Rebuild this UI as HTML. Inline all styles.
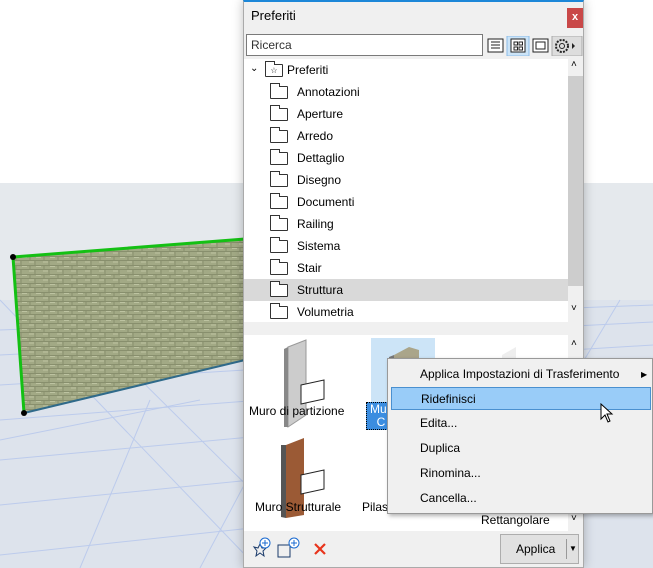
<!DOCTYPE html>
<html><head><style>
*{margin:0;padding:0;box-sizing:border-box}
body{width:653px;height:568px;overflow:hidden;position:relative;background:#fff;font-family:"Segoe UI","Liberation Sans",sans-serif;font-size:12px;color:#000}
.abs{position:absolute}
.row{position:absolute;left:0;height:22px;line-height:22px;width:324px}
.fold{position:absolute;width:18px;height:13px;border:1px solid #333;background:#fff;border-radius:1px}
.fold:before{content:"";position:absolute;left:-1px;top:-4px;width:8px;height:3px;border:1px solid #333;border-bottom:none;background:#fff}
.mi{position:absolute;left:3px;width:260px;height:23px;line-height:23px;padding-left:29px;font-size:12px}
</style></head><body>
<svg class="abs" style="left:0;top:0" width="653" height="568">
<defs><pattern id="st" width="14" height="9" patternUnits="userSpaceOnUse"><rect width="14" height="9" fill="#a2a985"/><path d="M0 8.5H14M7 0V4.5M0 4.5H14M2 4.5V9" stroke="#7d8462" stroke-width="1" opacity=".7"/><path d="M1 1H6M8 5.5H13" stroke="#c4c9a8" opacity=".8"/></pattern></defs>
<rect x="0" y="183" width="653" height="385" fill="#e5e9ed"/>
<rect x="0" y="300" width="653" height="268" fill="#dde3ec"/>
<g stroke="#bccbec" stroke-width="1" fill="none">
<path d="M0 330 L653 305 M0 355 L653 322 M0 385 L653 345 M0 420 L653 370 M0 460 L653 400 M0 505 L653 440 M0 555 L653 485"/>
<path d="M0 300 L250 560 M60 300 L330 568 M150 400 L80 568 M300 380 L200 568 M620 300 L460 568 M0 440 L200 400"/>
</g>
<polygon points="13,257 245,239 245,360 24,413" fill="url(#st)"/>
<path d="M13 257 L245 239 M13 257 L24 413" stroke="#14c014" stroke-width="3"/>
<path d="M24 413 L245 360" stroke="#2f6a8a" stroke-width="2"/>
<circle cx="13" cy="257" r="3" fill="#000"/><circle cx="24" cy="413" r="3" fill="#000"/>
</svg>
<!-- panel -->
<div class="abs" style="left:243px;top:0;width:341px;height:568px;background:#f0f0f0;border:1px solid #aaa;border-top:2px solid #1c87d8;box-shadow:0 0 10px rgba(0,0,0,.25)">
 <div class="abs" style="left:7px;top:6px;font-size:13px">Preferiti</div>
 <div class="abs" style="left:323px;top:6px;width:16px;height:20px;background:#c94848;color:#fff;text-align:center;line-height:19px;font-weight:bold;font-size:11px">x</div>
 <div class="abs" style="left:2px;top:32px;width:237px;height:22px;border:1px solid #7a7a7a;background:#fff;padding-left:4px;line-height:20px;color:#333">Ricerca</div>
 <svg class="abs" style="left:243px;top:34px" width="96" height="20">
  <rect x="1" y="3" width="15" height="13" fill="#fff" stroke="#222"/><path d="M4 6h9M4 9h9M4 12h9" stroke="#222"/>
  <rect x="20" y="0" width="22" height="20" fill="#cce4f7" stroke="#8bbde8"/>
  <rect x="24" y="3" width="14" height="13" fill="#fff" stroke="#222"/><rect x="27" y="6" width="3.5" height="3" fill="none" stroke="#222"/><rect x="32" y="6" width="3.5" height="3" fill="none" stroke="#222"/><rect x="27" y="11" width="3.5" height="3" fill="none" stroke="#222"/><rect x="32" y="11" width="3.5" height="3" fill="none" stroke="#222"/>
  <rect x="46" y="3" width="15" height="13" fill="#fff" stroke="#222"/><rect x="49" y="6" width="9" height="7" fill="none" stroke="#222"/>
  <rect x="65" y="0" width="30" height="20" fill="#ddd" stroke="#aaa"/>
  <circle cx="75" cy="10" r="6" fill="none" stroke="#222" stroke-dasharray="2 1.2" stroke-width="2"/><circle cx="75" cy="10" r="2.5" fill="none" stroke="#222"/>
  <path d="M85 7l3 3-3 3z" fill="#222"/>
 </svg>
 <div class="abs" style="left:0;top:57px;width:339px;height:263px;background:#fff">
  <div class="row" style="top:0"><span class="abs" style="left:6px;top:-1px;font-size:10px">&#8964;</span><div class="fold" style="left:21px;top:5px;font-size:8px;text-align:center;line-height:11px">☆</div><span class="abs" style="left:43px">Preferiti</span></div>
  <div class="row" style="top:22px"><div class="fold" style="left:26px;top:5px"></div><span class="abs" style="left:53px">Annotazioni</span></div>
  <div class="row" style="top:44px"><div class="fold" style="left:26px;top:5px"></div><span class="abs" style="left:53px">Aperture</span></div>
  <div class="row" style="top:66px"><div class="fold" style="left:26px;top:5px"></div><span class="abs" style="left:53px">Arredo</span></div>
  <div class="row" style="top:88px"><div class="fold" style="left:26px;top:5px"></div><span class="abs" style="left:53px">Dettaglio</span></div>
  <div class="row" style="top:110px"><div class="fold" style="left:26px;top:5px"></div><span class="abs" style="left:53px">Disegno</span></div>
  <div class="row" style="top:132px"><div class="fold" style="left:26px;top:5px"></div><span class="abs" style="left:53px">Documenti</span></div>
  <div class="row" style="top:154px"><div class="fold" style="left:26px;top:5px"></div><span class="abs" style="left:53px">Railing</span></div>
  <div class="row" style="top:176px"><div class="fold" style="left:26px;top:5px"></div><span class="abs" style="left:53px">Sistema</span></div>
  <div class="row" style="top:198px"><div class="fold" style="left:26px;top:5px"></div><span class="abs" style="left:53px">Stair</span></div>
  <div class="row" style="top:220px;background:#d9d9d9"><div class="fold" style="left:26px;top:5px"></div><span class="abs" style="left:53px">Struttura</span></div>
  <div class="row" style="top:242px"><div class="fold" style="left:26px;top:5px"></div><span class="abs" style="left:53px">Volumetria</span></div>
  <div class="abs" style="left:324px;top:0;width:15px;height:263px;background:#f0f0f0"><div class="abs" style="left:0;top:17px;width:15px;height:210px;background:#cdcdcd"></div><span class="abs" style="left:3px;top:0;font-size:10px">˄</span><span class="abs" style="left:3px;top:244px;font-size:10px">˅</span></div>
 </div>
 <div class="abs" style="left:0;top:333px;width:339px;height:196px;background:#fff">
  <div class="abs" style="left:324px;top:0;width:15px;height:196px;background:#f0f0f0"><span class="abs" style="left:3px;top:3px;font-size:10px">˄</span><span class="abs" style="left:3px;top:178px;font-size:10px">˅</span></div>
  <svg class="abs" style="left:0;top:0" width="324" height="196">
   <polygon points="44,12 62,5 62,80 44,92" fill="#ccc" stroke="#999"/><polygon points="40,14 44,12 44,92 40,92" fill="#888"/>
   <polygon points="57,50 80,45 80,64 57,69" fill="#fff" stroke="#222"/>
   <rect x="127" y="3" width="64" height="64" fill="#cce4f7"/>
   <polygon points="150,20 165,12 175,15 175,60 150,70" fill="#aaa58a"/><polygon points="145,22 150,20 150,70 145,70" fill="#777"/>
   <polygon points="258,20 272,12 272,50 258,60" fill="#eee"/>
   <polygon points="42,110 60,103 60,180 42,183" fill="#9b5a35"/><polygon points="37,110 42,110 42,183 37,182" fill="#555"/>
   <polygon points="57,140 80,135 80,154 57,159" fill="#fff" stroke="#222"/>
  </svg>
  <div class="abs" style="left:5px;top:69px">Muro di partizione</div>
  <div class="abs" style="left:122px;top:67px;width:30px;height:28px;background:#3b8de0;color:#fff;border:1px dotted #000;padding-left:3px;line-height:13px">Mu<br>&nbsp;&nbsp;C</div>
  <div class="abs" style="left:11px;top:165px">Muro Strutturale</div>
  <div class="abs" style="left:118px;top:165px">Pilast</div>
  <div class="abs" style="left:237px;top:178px">Rettangolare</div>
 </div>
 <svg class="abs" style="left:6px;top:535px" width="90" height="24">
  <path d="M4 10 L8 11 L10 7 L12 11 L16 11 L13 14 L14 19 L10 16 L6 19 L7 14 Z" fill="none" stroke="#1a3a6a"/>
  <circle cx="15" cy="6" r="5" fill="#fff" stroke="#1a6ad0"/><path d="M15 3v6M12 6h6" stroke="#1a6ad0"/>
  <path d="M32 8h8v12h-12v-12z" fill="none" stroke="#1a3a6a"/><circle cx="44" cy="6" r="5" fill="#fff" stroke="#1a6ad0"/><path d="M44 3v6M41 6h6" stroke="#1a6ad0"/>
  <path d="M65 7l10 10M75 7l-10 10" stroke="#e8341c" stroke-width="2.2"/>
 </svg>
 <div class="abs" style="left:256px;top:532px;width:79px;height:30px;background:#e1e1e1;border:1px solid #adadad;line-height:28px;padding-left:15px;font-size:12px">Applica<span class="abs" style="left:65px;top:0;border-left:1px solid #999;height:20px;margin-top:4px"></span><span class="abs" style="left:68px;top:0;font-size:8px">▼</span></div>
</div>
<!-- context menu -->
<div class="abs" style="left:387px;top:358px;width:266px;height:156px;background:#f0f0f0;border:1px solid #999;box-shadow:2px 2px 4px rgba(0,0,0,.3)">
 <div class="mi" style="top:4px">Applica Impostazioni di Trasferimento<span class="abs" style="left:250px;top:0;font-size:8px">▶</span></div>
 <div class="mi" style="top:28px;background:#99ccf8;border:1px solid #4a90d0">Ridefinisci</div>
 <div class="mi" style="top:53px">Edita...</div>
 <div class="mi" style="top:78px">Duplica</div>
 <div class="mi" style="top:103px">Rinomina...</div>
 <div class="mi" style="top:128px">Cancella...</div>
</div>
<svg class="abs" style="left:600px;top:403px" width="16" height="22"><path d="M1 1 L1 16 L5 12 L8 19 L10 18 L7 11 L12 11 Z" fill="#fff" stroke="#000"/></svg>
</body></html>
